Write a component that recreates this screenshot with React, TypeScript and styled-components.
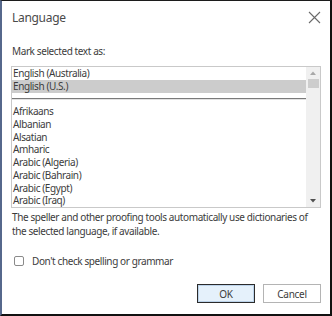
import React from "react";
import styled, { createGlobalStyle } from "styled-components";

const Global = createGlobalStyle`
  html, body { margin: 0; padding: 0; background: #ffffff; }
  * { box-sizing: border-box; }
`;

const Dialog = styled.div`
  width: 332px;
  height: 316px;
  background: #ffffff;
  border-top: 1px solid #1c1c1c;
  border-right: 2px solid #111111;
  border-bottom: 2px solid #111111;
  border-left: 2px solid #56688c;
  padding: 0 9px;
  display: flex;
  flex-direction: column;
  font-family: "Noto Sans", "Open Sans", sans-serif;
  font-size: 10px;
  letter-spacing: -0.4px;
  color: #3c3c3c;
`;

const Header = styled.div`
  height: 33px;
  display: flex;
  align-items: center;
  justify-content: space-between;
`;

const Title = styled.div`
  font-size: 12px;
  letter-spacing: -0.3px;
  color: #4a4a4a;
  padding-left: 1px;
`;

const CloseButton = styled.button`
  border: none;
  background: transparent;
  padding: 0;
  width: 13px;
  height: 13px;
  display: flex;
  align-items: center;
  justify-content: center;
`;

const Label = styled.div`
  margin-top: 10px;
  line-height: 14px;
  padding-left: 1px;
`;

const ListBox = styled.div`
  margin-top: 8px;
  height: 142px;
  border: 1px solid #c9c9c9;
  display: flex;
  overflow: hidden;
`;

const Items = styled.div`
  flex: 1;
  display: flex;
  flex-direction: column;
`;

const Item = styled.div<{ $selected?: boolean }>`
  height: 12.75px;
  line-height: 12.75px;
  padding-left: 1px;
  white-space: nowrap;
  background: ${(p) => (p.$selected ? "#cccccc" : "transparent")};
`;

const SeparatorRow = styled.div`
  height: 12.75px;
  display: flex;
  align-items: center;
`;

const SeparatorLine = styled.div`
  flex: 1;
  height: 1px;
  background: #7a7a7a;
  box-shadow: 0 1px 0 #e2e2e2;
`;

const ScrollBar = styled.div`
  width: 14px;
  background: #f0f0f0;
  display: flex;
  flex-direction: column;
  align-items: center;
  padding: 0 1px;
`;

const ArrowBox = styled.div`
  height: 12px;
  width: 100%;
  display: flex;
  align-items: center;
  justify-content: center;
`;

const Thumb = styled.div`
  width: 11px;
  height: 9px;
  background: #cdcdcd;
`;

const Track = styled.div`
  flex: 1;
`;

const Paragraph = styled.p`
  margin: 2px 0 0;
  line-height: 14px;
  padding-left: 1px;
  white-space: nowrap;
`;

const CheckRow = styled.label`
  margin-top: 16px;
  height: 14px;
  display: flex;
  align-items: center;
  gap: 8px;
  padding-left: 3px;
`;

const CheckBox = styled.span`
  width: 10px;
  height: 10px;
  border: 1px solid #8a8a8a;
  border-radius: 2px;
  background: #ffffff;
`;

const ButtonRow = styled.div`
  margin-top: 16px;
  display: flex;
  justify-content: flex-end;
  gap: 8px;
`;

const Button = styled.button<{ $primary?: boolean }>`
  width: 58px;
  height: 19px;
  font-family: "Noto Sans", "Open Sans", sans-serif;
  font-size: 10px;
  letter-spacing: -0.3px;
  color: #3c3c3c;
  padding: 0;
  background: ${(p) => (p.$primary ? "#e5f1fb" : "#ffffff")};
  border: ${(p) => (p.$primary ? "1px solid #2b2b2b" : "1px solid #b4b4b4")};
  box-shadow: ${(p) => (p.$primary ? "inset 0 0 0 1px #bcd3ea" : "none")};
`;

const languages = [
  "Afrikaans",
  "Albanian",
  "Alsatian",
  "Amharic",
  "Arabic (Algeria)",
  "Arabic (Bahrain)",
  "Arabic (Egypt)",
  "Arabic (Iraq)",
];

export default function App() {
  return (
    <>
      <Global />
      <Dialog>
        <Header>
          <Title>Language</Title>
          <CloseButton aria-label="Close">
            <svg width="13" height="13" viewBox="0 0 13 13">
              <path d="M1 1 L12 12 M12 1 L1 12" stroke="#6a6a6a" strokeWidth="1.1" fill="none" />
            </svg>
          </CloseButton>
        </Header>
        <Label>Mark selected text as:</Label>
        <ListBox>
          <Items>
            <Item>English (Australia)</Item>
            <Item $selected>English (U.S.)</Item>
            <SeparatorRow>
              <SeparatorLine />
            </SeparatorRow>
            {languages.map((l) => (
              <Item key={l}>{l}</Item>
            ))}
          </Items>
          <ScrollBar>
            <ArrowBox>
              <svg width="6" height="4" viewBox="0 0 6 4">
                <path d="M0 4 L3 0.5 L6 4 Z" fill="#a8a8a8" />
              </svg>
            </ArrowBox>
            <Thumb />
            <Track />
            <ArrowBox>
              <svg width="6" height="4" viewBox="0 0 6 4">
                <path d="M0 0 L3 3.5 L6 0 Z" fill="#505050" />
              </svg>
            </ArrowBox>
          </ScrollBar>
        </ListBox>
        <Paragraph>
          The speller and other proofing tools automatically use dictionaries of
          <br />
          the selected language, if available.
        </Paragraph>
        <CheckRow>
          <CheckBox />
          <span>Don't check spelling or grammar</span>
        </CheckRow>
        <ButtonRow>
          <Button $primary>OK</Button>
          <Button>Cancel</Button>
        </ButtonRow>
      </Dialog>
    </>
  );
}
